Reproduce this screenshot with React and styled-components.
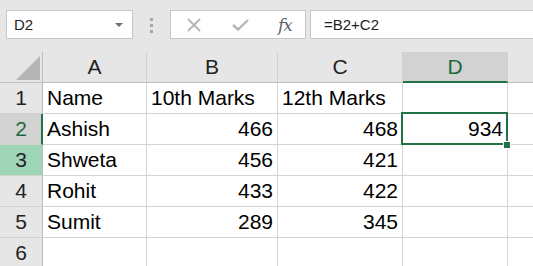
import React from "react";
import styled, { createGlobalStyle, css } from "styled-components";

const GREEN = "#217346";

const Global = createGlobalStyle`
  html, body { margin: 0; padding: 0; background: #ffffff; overflow: hidden; }
  body { font-family: "Liberation Sans", Arial, sans-serif; }
  * { box-sizing: border-box; }
`;

const Page = styled.div`
  width: 533px;
  height: 266px;
  overflow: hidden;
  background: #ffffff;
`;

const Toolbar = styled.div`
  display: flex;
  align-items: flex-start;
  height: 52px;
  padding: 10px 0 0 6px;
  background: #e6e6e6;
`;

const NameBox = styled.div`
  display: flex;
  align-items: center;
  justify-content: space-between;
  width: 127px;
  height: 29px;
  padding: 0 9px 0 7px;
  background: #ffffff;
  border: 1px solid #c6c6c6;
  font-size: 15px;
  color: #222;
`;

const Caret = styled.span`
  width: 0;
  height: 0;
  border-left: 4px solid transparent;
  border-right: 4px solid transparent;
  border-top: 4px solid #707070;
`;

const Dots = styled.div`
  display: flex;
  flex-direction: column;
  gap: 3px;
  width: 3px;
  margin: 8px 17px 0 17px;
  span {
    width: 3px;
    height: 3px;
    background: #a8a8a8;
  }
`;

const ButtonBox = styled.div`
  display: flex;
  align-items: center;
  width: 136px;
  height: 29px;
  padding: 0 0 0 14px;
  background: #ffffff;
  border: 1px solid #c6c6c6;
`;

const IconSlot = styled.div`
  display: flex;
  align-items: center;
  justify-content: center;
  width: ${(p) => p.$w}px;
  height: 27px;
`;

const Fx = styled.span`
  font-family: "DejaVu Serif", "Liberation Serif", serif;
  font-style: italic;
  font-size: 17px;
  color: #626262;
  letter-spacing: -1px;
  margin-top: 1px;
`;

const FormulaBox = styled.div`
  flex: 1;
  display: flex;
  align-items: center;
  height: 29px;
  margin: 0 -2px 0 4px;
  padding-left: 13px;
  background: #ffffff;
  border: 1px solid #c6c6c6;
  font-size: 15px;
  color: #222;
`;

const Sheet = styled.div`
  display: grid;
  grid-template-columns: 43px 104px 131px 125px 105px 105px;
  grid-auto-rows: 31px;
`;

const HeaderCell = styled.div`
  display: flex;
  align-items: center;
  justify-content: center;
  background: ${(p) => (p.$selected ? "#d2d2d2" : "#e6e6e6")};
  border-right: 1px solid #d0d0d0;
  border-bottom: ${(p) => (p.$selected ? `2px solid ${GREEN}` : "1px solid #bdbdbd")};
  font-size: 21px;
  color: ${(p) => (p.$selected ? "#1d6a40" : "#222")};
  ${(p) => p.$selected && css`padding-top: 1px;`}
`;

const Corner = styled.div`
  display: flex;
  align-items: flex-end;
  justify-content: flex-end;
  padding: 0 2px 2px 0;
  background: #e6e6e6;
  border-right: 1px solid #bdbdbd;
  border-bottom: 1px solid #bdbdbd;
`;

const CornerTriangle = styled.div`
  width: 24px;
  height: 24px;
  background: #b4b4b4;
  clip-path: polygon(100% 0, 100% 100%, 0 100%);
`;

const rowBg = {
  normal: "#e6e6e6",
  selected: "#d2d2d2",
  highlight: "#9fd5b7",
};

const RowHeader = styled.div`
  display: flex;
  align-items: center;
  justify-content: center;
  background: ${(p) => rowBg[p.$state]};
  border-right: ${(p) => (p.$state === "selected" ? `2px solid ${GREEN}` : "1px solid #bdbdbd")};
  border-bottom: 1px solid #d0d0d0;
  font-size: 21px;
  color: ${(p) => (p.$state === "selected" ? "#1d6a40" : "#222")};
  ${(p) => p.$state === "selected" && css`padding-left: 1px;`}
`;

const Cell = styled.div`
  position: relative;
  display: flex;
  align-items: center;
  justify-content: ${(p) => (p.$num ? "flex-end" : "flex-start")};
  padding: 0 4px;
  border-right: 1px solid #d4d4d4;
  border-bottom: 1px solid #d4d4d4;
  font-size: 21px;
  color: #000;
  white-space: nowrap;
  ${(p) =>
    p.$active &&
    css`
      &::after {
        content: "";
        position: absolute;
        top: -2px;
        left: -2px;
        right: -1px;
        bottom: -1px;
        border: 2px solid ${GREEN};
        pointer-events: none;
      }
      &::before {
        content: "";
        position: absolute;
        right: -4px;
        bottom: -5px;
        width: 6px;
        height: 6px;
        background: ${GREEN};
        border: 1px solid #ffffff;
        box-sizing: content-box;
        z-index: 2;
      }
    `}
`;

const columns = ["A", "B", "C", "D", ""];
const rows = [
  ["Name", "10th Marks", "12th Marks", "", ""],
  ["Ashish", 466, 468, 934, ""],
  ["Shweta", 456, 421, "", ""],
  ["Rohit", 433, 422, "", ""],
  ["Sumit", 289, 345, "", ""],
  ["", "", "", "", ""],
];

const rowState = (i) => (i === 1 ? "selected" : i === 2 ? "highlight" : "normal");

export default function App() {
  return (
    <Page>
      <Global />
      <Toolbar>
        <NameBox>
          <span>D2</span>
          <Caret />
        </NameBox>
        <Dots>
          <span />
          <span />
          <span />
        </Dots>
        <ButtonBox>
          <IconSlot $w={18}>
            <svg width="16" height="14" viewBox="0 0 16 14">
              <path d="M2 1 L14 13 M14 1 L2 13" stroke="#b5b5b5" strokeWidth="1.8" fill="none" />
            </svg>
          </IconSlot>
          <IconSlot $w={28} />
          <IconSlot $w={18}>
            <svg width="17" height="12" viewBox="0 0 17 12">
              <path d="M1 6 L6 10.5 L16 1" stroke="#b5b5b5" strokeWidth="2.4" fill="none" />
            </svg>
          </IconSlot>
          <IconSlot $w={27} />
          <IconSlot $w={18}>
            <Fx>fx</Fx>
          </IconSlot>
        </ButtonBox>
        <FormulaBox>=B2+C2</FormulaBox>
      </Toolbar>
      <Sheet>
        <Corner>
          <CornerTriangle />
        </Corner>
        {columns.map((c, i) => (
          <HeaderCell key={i} $selected={c === "D"}>
            {c}
          </HeaderCell>
        ))}
        {rows.map((r, i) => (
          <React.Fragment key={i}>
            <RowHeader $state={rowState(i)}>{i + 1}</RowHeader>
            {r.map((v, j) => (
              <Cell key={j} $num={typeof v === "number"} $active={i === 1 && j === 3}>
                {v}
              </Cell>
            ))}
          </React.Fragment>
        ))}
      </Sheet>
    </Page>
  );
}
